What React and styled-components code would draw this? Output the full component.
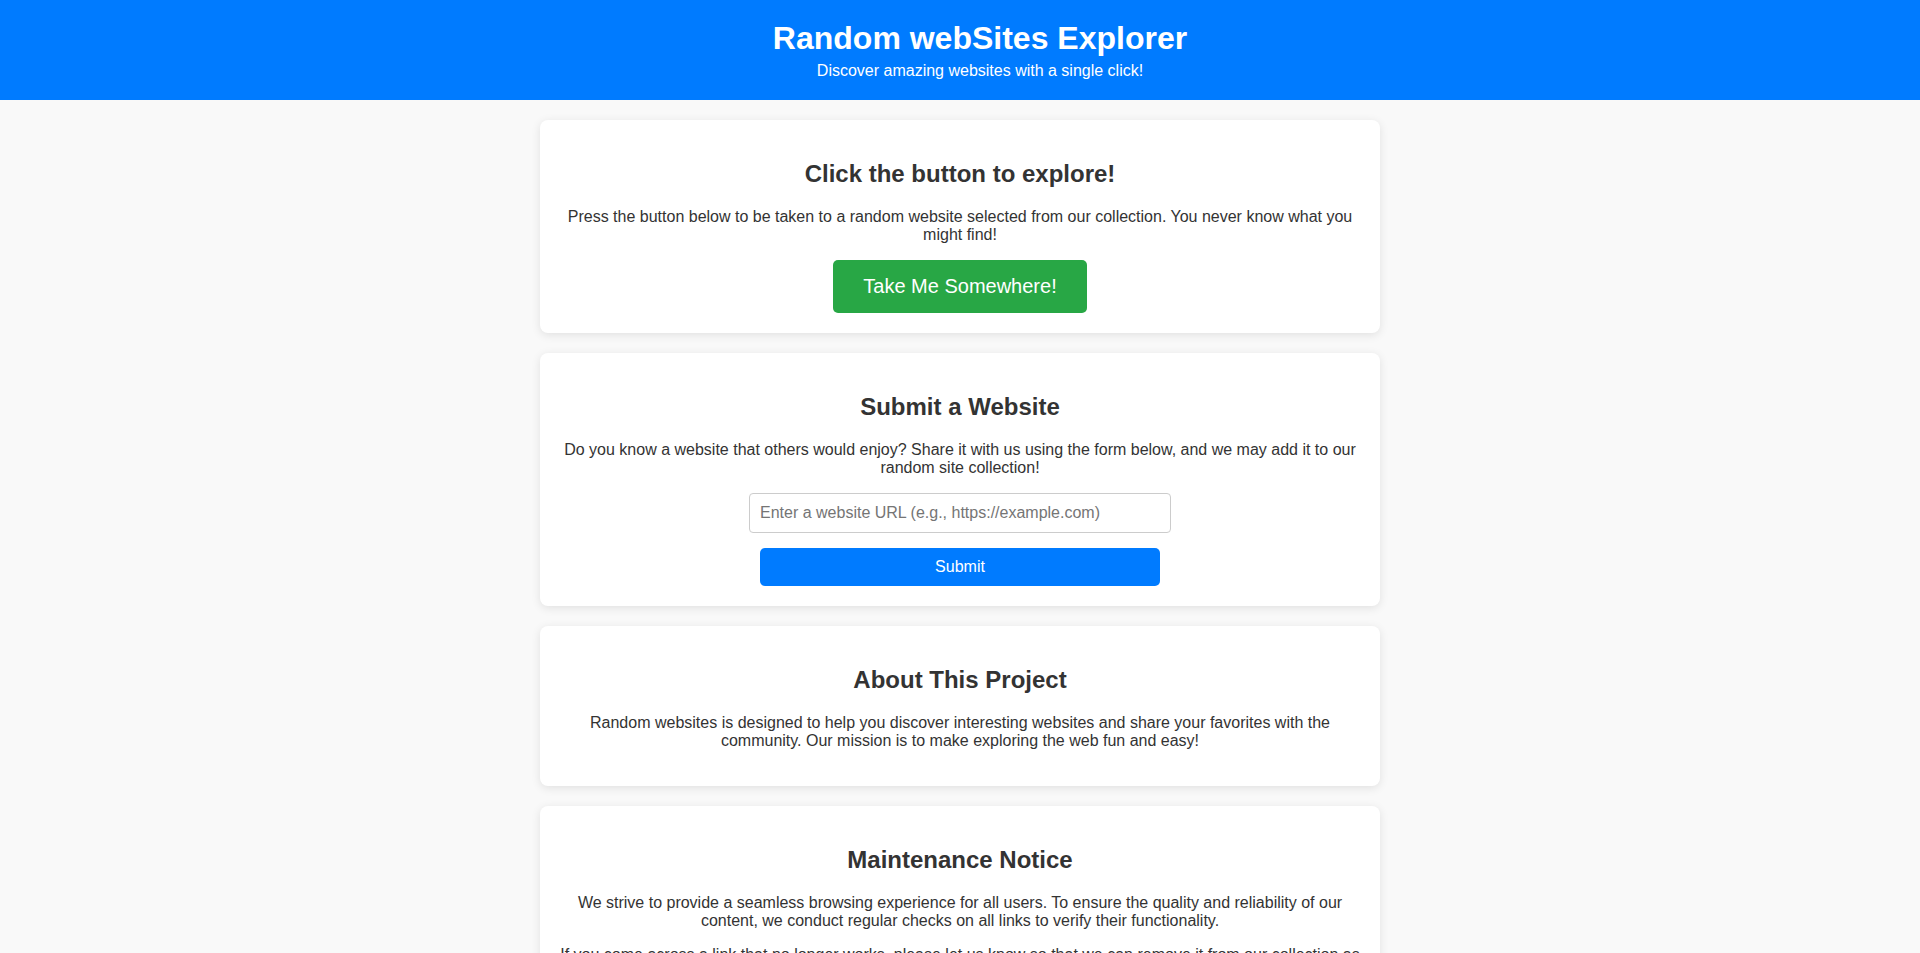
import React from "react";
import styled, { createGlobalStyle } from "styled-components";

const GlobalStyle = createGlobalStyle`
    html::-webkit-scrollbar {
        width: 17px;
        height: 17px;
        background-color: #f1f1f1;
    }
    html::-webkit-scrollbar-thumb {
        background-color: #c1c1c1;
        border: 2px solid #f1f1f1;
    }
    html::-webkit-scrollbar-corner {
        background-color: #dcdcdc;
    }
    body {
        margin: 0;
        font-family: "Liberation Sans", Arial, sans-serif;
        background-color: #f9f9f9;
        color: #333;
    }
`;

const App = () => {
    return(
        <React.Fragment>
            <GlobalStyle />
            <Header>
                <Title>Random webSites Explorer</Title>
                <Subtitle>Discover amazing websites with a single click!</Subtitle>
            </Header>
            <Card>
                <CardTitle>Click the button to explore!</CardTitle>
                <CardText>Press the button below to be taken to a random website selected from our collection. You never know what you might find!</CardText>
                <ExploreButton>Take Me Somewhere!</ExploreButton>
            </Card>
            <Card>
                <CardTitle>Submit a Website</CardTitle>
                <CardText>Do you know a website that others would enjoy? Share it with us using the form below, and we may add it to our random site collection!</CardText>
                <form onSubmit={(e) => e.preventDefault()}>
                    <UrlInput type="url" placeholder="Enter a website URL (e.g., https://example.com)" />
                    <SubmitButton type="submit">Submit</SubmitButton>
                </form>
            </Card>
            <Card>
                <CardTitle>About This Project</CardTitle>
                <CardText>Random websites is designed to help you discover interesting websites and share your favorites with the community. Our mission is to make exploring the web fun and easy!</CardText>
            </Card>
            <Card>
                <CardTitle>Maintenance Notice</CardTitle>
                <CardText>We strive to provide a seamless browsing experience for all users. To ensure the quality and reliability of our content, we conduct regular checks on all links to verify their functionality.</CardText>
                <CardText>If you come across a link that no longer works, please let us know so that we can remove it from our collection as soon as possible. Thank you for your help!</CardText>
            </Card>
            <Card>
                <CardTitle>Contact Us</CardTitle>
                <CardText>Have questions or feedback? Reach out to us at contact@randomwebsites.com</CardText>
            </Card>
        </React.Fragment>
    )
}

export default App;

const Header = styled.header`
    background-color: #007bff;
    color: #ffffff;
    padding: 20px;
    width: 100%;
    text-align: center;
`;

const Title = styled.h1`
    margin: 0;
    font-size: 32px;
    font-weight: bold;
`;

const Subtitle = styled.p`
    margin: 5px 0 0 0;
    font-size: 16px;
`;

const Card = styled.section`
    background-color: #ffffff;
    max-width: 800px;
    margin: 20px auto;
    padding: 20px;
    border-radius: 8px;
    box-shadow: 0 2px 10px rgba(0, 0, 0, 0.1);
    text-align: center;
`;

const CardTitle = styled.h2`
    font-size: 24px;
    font-weight: bold;
    margin: 20px 0;
`;

const CardText = styled.p`
    font-size: 16px;
    margin: 16px 0;
`;

const ExploreButton = styled.button`
    background-color: #28a745;
    color: #ffffff;
    border: none;
    border-radius: 5px;
    padding: 15px 30px;
    font-family: inherit;
    font-size: 20px;
    cursor: pointer;
`;

const UrlInput = styled.input`
    display: block;
    width: 50%;
    margin: 0 auto 15px auto;
    padding: 10px;
    border: 1px solid #ccc;
    border-radius: 4px;
    font-family: inherit;
    font-size: 16px;
`;

const SubmitButton = styled.button`
    display: block;
    width: 50%;
    margin: 0 auto;
    padding: 10px;
    background-color: #007bff;
    color: #ffffff;
    border: none;
    border-radius: 5px;
    font-family: inherit;
    font-size: 16px;
    cursor: pointer;
`;
